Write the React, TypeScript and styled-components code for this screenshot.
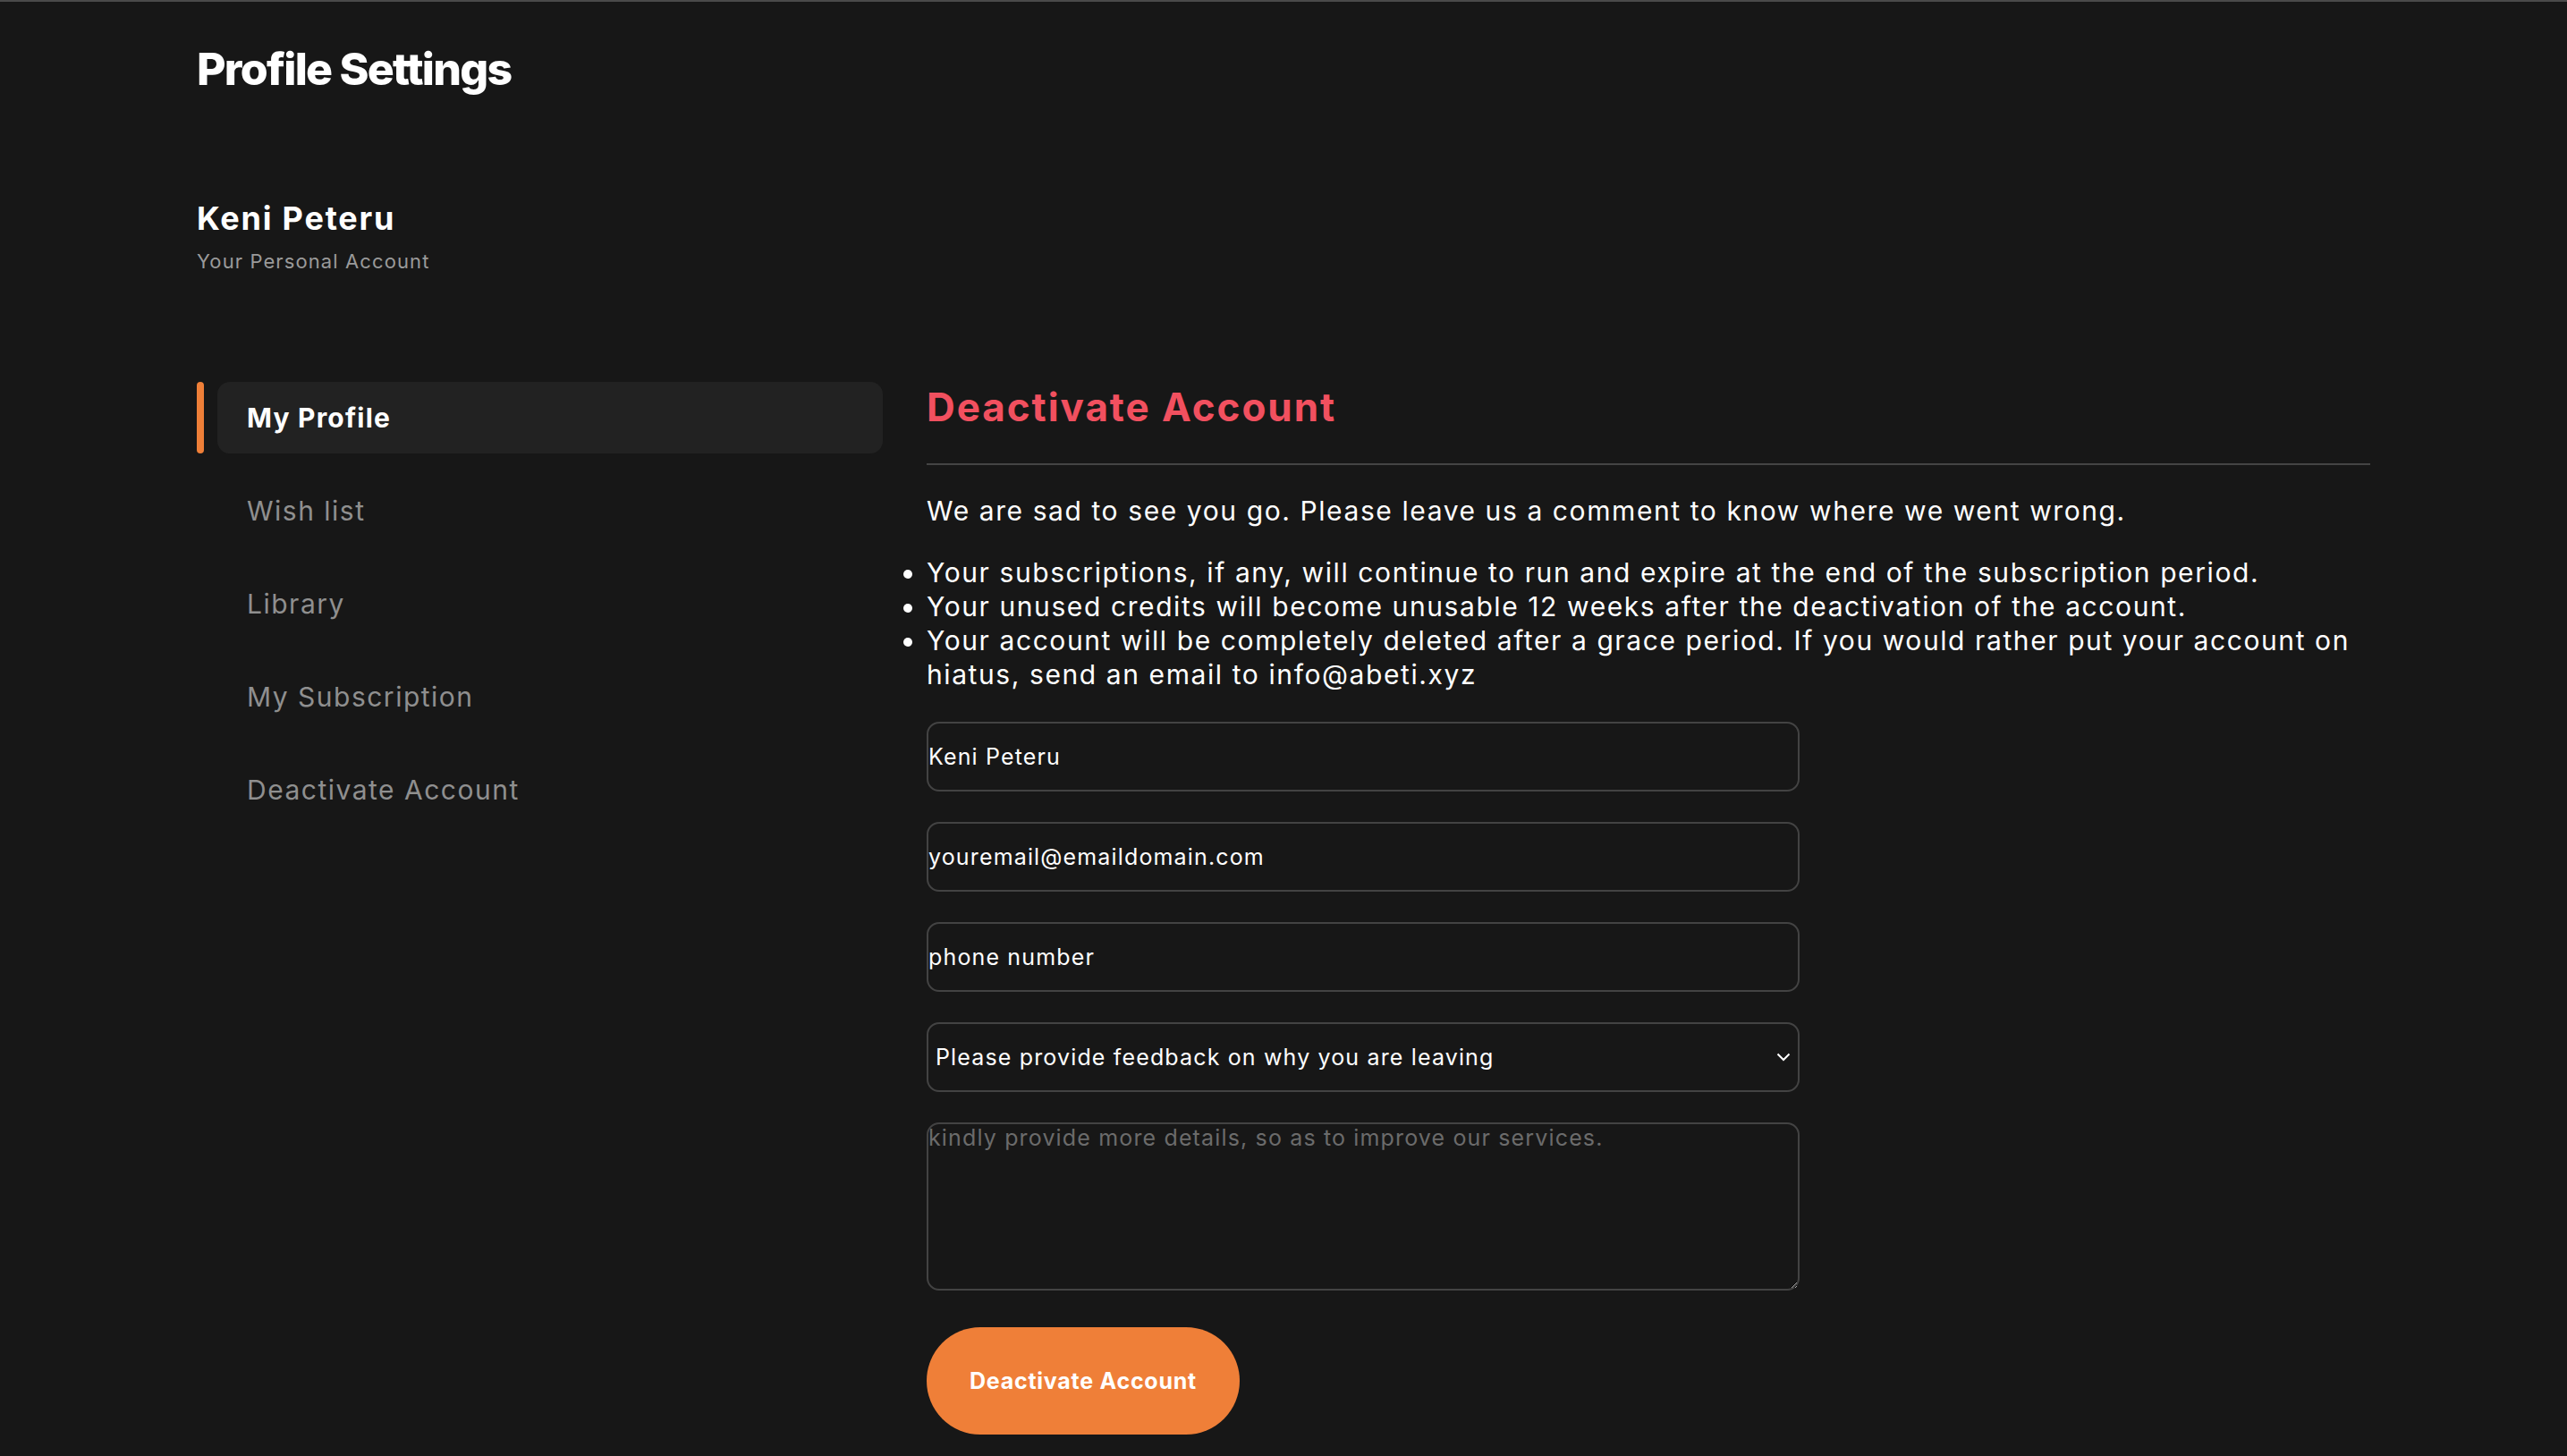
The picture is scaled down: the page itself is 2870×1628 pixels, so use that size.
import React from "react";
import styled, { createGlobalStyle } from "styled-components";

const GlobalStyle = createGlobalStyle`
  html, body {
    margin: 0;
    padding: 0;
    background: #171717;
  }
  body {
    font-family: Inter, "Liberation Sans", sans-serif;
    color: #ffffff;
  }
  * { box-sizing: border-box; }
`;

const Page = styled.div`
  min-height: 100vh;
  border-top: 2px solid #4a4a4a;
  padding: 0 220px 40px;
`;

const Title = styled.h1`
  margin: 45px 0 0;
  font-size: 50px;
  line-height: 60px;
  font-weight: 800;
  letter-spacing: -0.035em;
  color: #ffffff;
`;

const Account = styled.div`
  margin-top: 115px;
  display: flex;
  flex-direction: column;
  gap: 12px;
`;

const AccountName = styled.div`
  font-size: 36px;
  line-height: 44px;
  font-weight: 700;
  letter-spacing: 0.05em;
  color: #ffffff;
`;

const AccountSub = styled.div`
  font-size: 22px;
  line-height: 28px;
  letter-spacing: 0.05em;
  color: #9a9a9a;
`;

const Layout = styled.div`
  margin-top: 121px;
  display: grid;
  grid-template-columns: 767px 1fr;
  column-gap: 49px;
  align-items: start;
`;

const Nav = styled.nav`
  display: flex;
  flex-direction: column;
  gap: 24px;
`;

const NavRow = styled.div`
  display: flex;
  gap: 15px;
`;

const NavMarker = styled.span<{ $active?: boolean }>`
  width: 8px;
  border-radius: 4px;
  background: ${(p) => (p.$active ? "#ef7f38" : "transparent")};
`;

const NavItem = styled.a<{ $active?: boolean }>`
  flex: 1;
  height: 80px;
  display: flex;
  align-items: center;
  padding-left: 33px;
  border-radius: 14px;
  font-size: 30px;
  letter-spacing: ${(p) => (p.$active ? "0.04em" : "0.05em")};
  font-weight: ${(p) => (p.$active ? 700 : 400)};
  color: ${(p) => (p.$active ? "#ffffff" : "#8f8f8f")};
  background: ${(p) => (p.$active ? "#222222" : "transparent")};
  text-decoration: none;
  cursor: pointer;
`;

const Main = styled.section`
  display: flex;
  flex-direction: column;
`;

const Heading = styled.h2`
  margin: 0;
  font-size: 44px;
  line-height: 56px;
  font-weight: 700;
  letter-spacing: 0.044em;
  color: #f1505f;
`;

const Divider = styled.hr`
  margin: 35px 0 0;
  border: none;
  height: 2px;
  background: #444444;
`;

const Lead = styled.p`
  margin: 32px 0 0;
  font-size: 30px;
  line-height: 38px;
  letter-spacing: 0.053em;
  color: #ffffff;
`;

const Notes = styled.ul`
  margin: 31px 0 0;
  padding: 0;
  font-size: 30px;
  line-height: 38px;
  letter-spacing: 0.053em;
  color: #ffffff;
`;

const Note = styled.li``;

const Form = styled.form`
  margin-top: 34px;
  width: 976px;
  display: flex;
  flex-direction: column;
  gap: 34px;
`;

const fieldBase = `
  width: 100%;
  background: #171717;
  border: 2px solid #434343;
  border-radius: 14px;
  color: #ffffff;
  font-family: Inter, "Liberation Sans", sans-serif;
  font-size: 25px;
  letter-spacing: 0.046em;
  outline: none;
`;

const TextInput = styled.input`
  ${fieldBase}
  height: 78px;
  padding: 0;
  &::placeholder { color: #ffffff; }
`;

const SelectWrap = styled.div`
  position: relative;
`;

const Select = styled.select`
  ${fieldBase}
  height: 78px;
  padding: 0 40px 0 8px;
  appearance: none;
  -webkit-appearance: none;
`;

const Chevron = styled.svg`
  position: absolute;
  right: 10px;
  top: 50%;
  width: 16px;
  height: 10px;
  transform: translateY(-50%);
  pointer-events: none;
`;

const TextArea = styled.textarea`
  ${fieldBase}
  height: 188px;
  padding: 0;
  resize: both;
  &::placeholder { color: #6b6b6b; }
`;

const Submit = styled.button`
  margin-top: 7px;
  align-self: flex-start;
  width: 350px;
  height: 120px;
  border: none;
  border-radius: 60px;
  background: #ef7f38;
  color: #ffffff;
  font-family: Inter, "Liberation Sans", sans-serif;
  font-size: 25px;
  font-weight: 700;
  letter-spacing: 0.03em;
  cursor: pointer;
`;

const navItems = ["My Profile", "Wish list", "Library", "My Subscription", "Deactivate Account"];

export default function App() {
  return (
    <>
      <GlobalStyle />
      <Page>
        <Title>Profile Settings</Title>
        <Account>
          <AccountName>Keni Peteru</AccountName>
          <AccountSub>Your Personal Account</AccountSub>
        </Account>
        <Layout>
          <Nav>
            {navItems.map((item, i) => (
              <NavRow key={item}>
                <NavMarker $active={i === 0} />
                <NavItem $active={i === 0}>{item}</NavItem>
              </NavRow>
            ))}
          </Nav>
          <Main>
            <Heading>Deactivate Account</Heading>
            <Divider />
            <Lead>We are sad to see you go. Please leave us a comment to know where we went wrong.</Lead>
            <Notes>
              <Note>Your subscriptions, if any, will continue to run and expire at the end of the subscription period.</Note>
              <Note>Your unused credits will become unusable 12 weeks after the deactivation of the account.</Note>
              <Note>
                Your account will be completely deleted after a grace period. If you would rather put your account on
                hiatus, send an email to info@abeti.xyz
              </Note>
            </Notes>
            <Form onSubmit={(e) => e.preventDefault()}>
              <TextInput type="text" defaultValue="Keni Peteru" />
              <TextInput type="email" defaultValue="youremail@emaildomain.com" />
              <TextInput type="tel" placeholder="phone number" />
              <SelectWrap>
                <Select defaultValue="">
                  <option value="">Please provide feedback on why you are leaving</option>
                  <option value="price">Too expensive</option>
                  <option value="content">Not enough content</option>
                  <option value="other">Other</option>
                </Select>
                <Chevron viewBox="0 0 16 10" fill="none">
                  <path d="M1.5 1.5 L8 8 L14.5 1.5" stroke="#ffffff" strokeWidth="2" />
                </Chevron>
              </SelectWrap>
              <TextArea placeholder="kindly provide more details, so as to improve our services." />
              <Submit type="submit">Deactivate Account</Submit>
            </Form>
          </Main>
        </Layout>
      </Page>
    </>
  );
}
